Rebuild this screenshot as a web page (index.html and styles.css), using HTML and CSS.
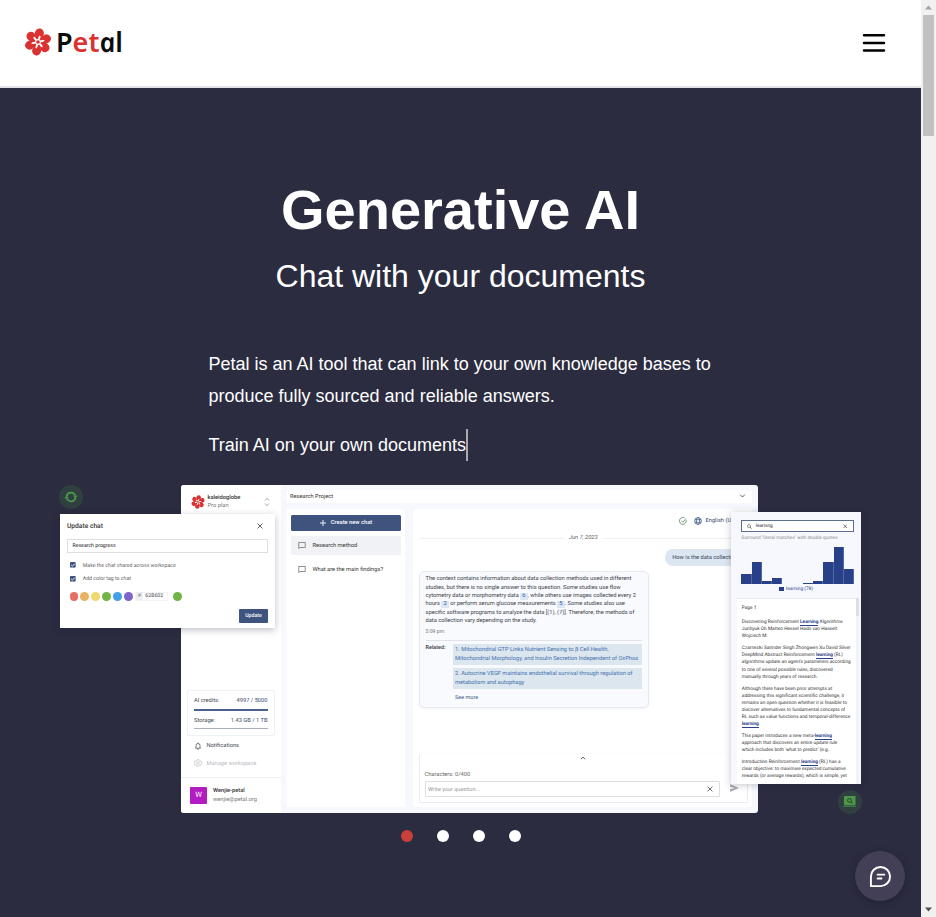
FILE: index.html
```html
<!DOCTYPE html>
<html lang="en">
<head>
<meta charset="utf-8">
<title>Petal</title>
<link rel="stylesheet" href="styles.css">
</head>
<body>
<svg class="defs" aria-hidden="true">
  <symbol id="flower" viewBox="-14 -14 28 28">
    <g fill="#dc3131">
      <ellipse cy="-8.7" rx="4.5" ry="4.900" transform="rotate(9)"/>
      <ellipse cy="-8.7" rx="4.5" ry="4.900" transform="rotate(69)"/>
      <ellipse cy="-8.7" rx="4.5" ry="4.900" transform="rotate(129)"/>
      <ellipse cy="-8.7" rx="4.5" ry="4.900" transform="rotate(189)"/>
      <ellipse cy="-8.7" rx="4.5" ry="4.900" transform="rotate(249)"/>
      <ellipse cy="-8.7" rx="4.5" ry="4.900" transform="rotate(309)"/>
      <circle r="6.5"/>
    </g>
    <g fill="#fff">
      <ellipse cy="-4.4" rx="1" ry="2.300" transform="rotate(18)"/>
      <ellipse cy="-4.4" rx="1" ry="2.300" transform="rotate(78)"/>
      <ellipse cy="-4.4" rx="1" ry="2.300" transform="rotate(138)"/>
      <ellipse cy="-4.4" rx="1" ry="2.300" transform="rotate(198)"/>
      <ellipse cy="-4.4" rx="1" ry="2.300" transform="rotate(258)"/>
      <ellipse cy="-4.4" rx="1" ry="2.300" transform="rotate(318)"/>
      <circle r="2.9"/>
    </g>
    <circle r="1.8" fill="#dc3131"/>
  </symbol>
  <symbol id="cross" viewBox="0 0 10 10"><path d="M1 1 9 9M9 1 1 9" fill="none" stroke="currentColor" stroke-width="1.3"/></symbol>
  <symbol id="bubble" viewBox="0 0 16 14"><path d="M1.5 1h13v10h-10.500l-2.500 2.200z" fill="none" stroke="currentColor" stroke-width="1.3"/></symbol>
  <symbol id="check" viewBox="0 0 10 10"><rect width="10" height="10" rx="1.200" fill="#3b5480"/><path d="M2 5.200 4.200 7.300 8 3" fill="none" stroke="#fff" stroke-width="1.500"/></symbol>
</svg>
<div class="viewport">
  <main class="page">
    <header class="header">
      <a class="brand"><svg class="brand-mark"><use href="#flower"/></svg><span class="brand-name">P<em>et</em><i>a</i>l</span></a>
      <button class="menu" aria-label="Menu"><svg viewBox="0 0 22 20"><path d="M1 2.300h20M1 9.900h20M1 17.500h20" stroke="#000" stroke-width="2.500" stroke-linecap="round"/></svg></button>
    </header>
    <section class="hero">
      <h1>Generative AI</h1>
      <h2>Chat with your documents</h2>
      <div class="intro">
        <p>Petal is an AI tool that can link to your own knowledge bases to<br>produce fully sourced and reliable answers.</p>
        <p class="typed">Train AI on your own documents<span class="caret"></span></p>
      </div>

      <div class="figure">
        <div class="app">
          <aside class="side">
            <div class="account">
              <svg class="account-mark"><use href="#flower"/></svg>
              <div class="stack"><b>kaleidoglobe</b><span>Pro plan</span></div>
              <svg class="updown" viewBox="0 0 6 10"><path d="M1 3.500 3 1.200 5 3.500M1 6.500 3 8.800 5 6.500" fill="none" stroke="#999" stroke-width=".8"/></svg>
            </div>
            <div class="usage">
              <div class="usage-row"><span>AI credits:</span><span class="num">4997 / 5000</span></div>
              <div class="meter full"></div>
              <div class="usage-row"><span>Storage:</span><span class="num">1.43 GB / 1 TB</span></div>
              <div class="meter"></div>
            </div>
            <div class="side-link first">
              <svg viewBox="0 0 16 16"><path d="M2.500 12.500h11M4 12V7a4 4 0 0 1 8 0v5M8 3V1.300M6.500 14.500h3" fill="none" stroke="currentColor" stroke-width="1.400"/></svg>
              <span>Notifications</span>
            </div>
            <div class="side-link muted">
              <svg viewBox="0 0 16 16"><path d="M6.500 1h3l.5 2.200 2 1.200 2-.7 1.500 2.600L14 8l1.500 1.700-1.500 2.600-2-.7-2 1.200-.5 2.200h-3L6 12.800l-2-1.200-2 .7L.5 9.700 2 8 .5 6.300 2 3.700l2 .7 2-1.200z" fill="none" stroke="currentColor" stroke-width="1.300"/><circle cx="8" cy="8" r="2.300" fill="none" stroke="currentColor" stroke-width="1.300"/></svg>
              <span>Manage workspace</span>
            </div>
            <div class="user">
              <div class="avatar">W</div>
              <div class="stack"><b>Wenjie-petal</b><span>wenjie@petal.org</span></div>
            </div>
          </aside>
          <div class="work">
            <div class="topbar"><span>Research Project</span><svg viewBox="0 0 10 6"><path d="M1.500 1 5 4.500 8.500 1" fill="none" stroke="#444" stroke-width="1.300"/></svg></div>
            <div class="columns">
              <div class="chats">
                <div class="create"><svg viewBox="0 0 10 10"><path d="M5 0v10M0 5h10" stroke="#fff" stroke-width="1.500"/></svg><span>Create new chat</span></div>
                <div class="chat active"><svg><use href="#bubble"/></svg><span>Research method</span></div>
                <div class="chat"><svg><use href="#bubble"/></svg><span>What are the main findings?</span></div>
              </div>
              <div class="thread">
                <div class="tools">
                  <svg class="ok" viewBox="0 0 14 14"><path d="M12.500 5.200A6 6 0 1 1 9.500 1.500M4 6.500 6.700 9.200 12.500 2.500" fill="none" stroke="#4c8056" stroke-width="1.300"/></svg>
                  <svg class="globe" viewBox="0 0 14 14"><g fill="none" stroke="#34507f" stroke-width="1.200"><circle cx="7" cy="7" r="6"/><ellipse cx="7" cy="7" rx="2.800" ry="6"/><path d="M1.500 4.700h11M1.500 9.300h11"/></g></svg>
                  <span>English (US)</span>
                </div>
                <div class="date"><span>Jun 7, 2023</span></div>
                <div class="question">How is the data collected?</div>
                <div class="answer">
                  <p>The context contains information about data collection methods used in different<br>studies, but there is no single answer to this question. Some studies use flow<br>cytometry data or morphometry data <mark>6</mark>, while others use images collected every 2<br>hours <mark>2</mark> or perform serum glucose measurements <mark>5</mark>. Some studies also use<br>specific software programs to analyze the data [(1), (7)]. Therefore, the methods of<br>data collection vary depending on the study.</p>
                  <time>5:09 pm</time>
                  <div class="related">
                    <b>Related:</b>
                    <div class="sources">
                      <div class="source">1. Mitochondrial GTP Links Nutrient Sensing to β Cell Health,<br>Mitochondrial Morphology, and Insulin Secretion Independent of OxPhos</div>
                      <div class="source">2. Autocrine VEGF maintains endothelial survival through regulation of<br>metabolism and autophagy</div>
                      <div class="more">See more</div>
                    </div>
                  </div>
                </div>
                <div class="composer">
                  <svg class="up" viewBox="0 0 10 6"><path d="M1.500 5 5 1.500 8.500 5" fill="none" stroke="#444" stroke-width="1.500"/></svg>
                  <label>Characters: 0/400</label>
                  <div class="ask">
                    <div class="ask-field"><span>Write your question...</span><svg><use href="#cross"/></svg></div>
                    <svg class="send" viewBox="0 0 10 9"><path d="M0 0 10 4.500 0 9V5.500L6 4.500 0 3.500z" fill="#a9abb0"/></svg>
                  </div>
                </div>
              </div>
            </div>
          </div>
        </div>

        <div class="badge sync">
          <svg viewBox="0 0 16 16"><g fill="none" stroke="#4e9a4c" stroke-width="2"><path d="M3 7.300A5.100 5.100 0 0 1 12.600 5.800M13 8.700A5.100 5.100 0 0 1 3.400 10.200"/></g><path d="M10.300 6.200h5.400L13 9.600zM5.700 9.800H.3L3 6.400z" fill="#4e9a4c"/></svg>
        </div>
        <div class="badge lens">
          <svg viewBox="0 0 14 12"><path d="M1 0h12v9.800H1z" fill="#4d9748"/><path d="M0 10.400h14V12H0z" fill="#3c7740"/><circle cx="6.700" cy="4.600" r="2" fill="none" stroke="#25402f"/><path d="m8.200 6 1.600 1.700" stroke="#25402f" stroke-width="1.100"/></svg>
        </div>

        <div class="dialog">
          <div class="dialog-head"><b>Update chat</b><svg><use href="#cross"/></svg></div>
          <div class="name-field">Research progress</div>
          <div class="option"><svg><use href="#check"/></svg><span>Make the chat shared across workspace</span></div>
          <div class="option"><svg><use href="#check"/></svg><span>Add color tag to chat</span></div>
          <div class="swatches">
            <i class="red"></i><i class="orange"></i><i class="yellow"></i><i class="green"></i><i class="blue"></i><i class="violet"></i>
            <div class="hex"><span>#</span><b>62B602</b></div>
            <i class="green"></i>
          </div>
          <div class="update">Update</div>
        </div>

        <div class="search">
          <div class="search-field"><svg viewBox="0 0 10 10"><circle cx="4" cy="4" r="3" fill="none" stroke="#444" stroke-width="1.100"/><path d="m6.200 6.200 3.300 3.300" stroke="#444" stroke-width="1.300"/></svg><span>learning</span><svg class="clear"><use href="#cross"/></svg></div>
          <div class="hint">Surround "literal matches" with double quotes</div>
          <div class="chart">
            <i style="height:10.700px"></i><i style="height:22px"></i><i style="height:3.200px"></i><i style="height:6.300px"></i><i style="height:0"></i><i style="height:0"></i><i style="height:1.800px"></i><i style="height:3.200px"></i><i style="height:22px"></i><i style="height:37.300px"></i><i style="height:15.700px"></i>
          </div>
          <div class="legend"><i></i><span>learning (78)</span></div>
          <div class="doc">
            <div class="doc-text">
              <p>Page 1</p>
              <p>Discovering Reinforcement <a>Learning</a> Algorithms<br>Junhyuk Oh Matteo Hessel Hado van Hasselt<br>Wojciech M.</p>
              <p>Czarnecki Satinder Singh Zhongwen Xu David Silver<br>DeepMind Abstract Reinforcement <a>learning</a> (RL)<br>algorithms update an agent's parameters according<br>to one of several possible rules, discovered<br>manually through years of research.</p>
              <p>Although there have been prior attempts at<br>addressing this significant scientific challenge, it<br>remains an open question whether it is feasible to<br>discover alternatives to fundamental concepts of<br>RL such as value functions and temporal-difference<br><a>learning</a>.</p>
              <p>This paper introduces a new meta-<a>learning</a><br>approach that discovers an entire update rule<br>which includes both 'what to predict' (e.g.</p>
              <p>Introduction Reinforcement <a>learning</a> (RL) has a<br>clear objective: to maximise expected cumulative<br>rewards (or average rewards), which is simple, yet</p>
            </div>
            <div class="doc-scroll"><i></i></div>
          </div>
        </div>
      </div>

      <div class="dots"><i class="on"></i><i></i><i></i><i></i></div>
    </section>
    <button class="fab" aria-label="Chat">
      <svg viewBox="0 0 24 24"><g fill="none" stroke="#fff" stroke-width="2" stroke-linejoin="round" stroke-linecap="round"><path d="M2 22V12a10 10 0 1 1 10 10z"/><path d="M9 10h7M9 14h4"/></g></svg>
    </button>
  </main>
  <div class="scrollbar">
    <svg viewBox="0 0 15 15"><path d="M4 9.500h7L7.500 5.500z" fill="#a3a3a3"/></svg>
    <div class="thumb"></div>
    <svg viewBox="0 0 15 15"><path d="M4 5.500h7L7.500 9.500z" fill="#505050"/></svg>
  </div>
</div>
</body>
</html>
```
FILE: styles.css
```css
* { box-sizing: border-box; }
body { margin: 0; overflow: hidden; font-family: "Liberation Sans", Arial, sans-serif; }
h1, h2, p { margin: 0; }
button { border: 0; padding: 0; }
svg { display: block; flex: none; }
.defs { position: absolute; width: 0; height: 0; }

.viewport { display: flex; width: 936px; height: 917px; overflow: hidden; }
.page { position: relative; width: 921px; height: 917px; background: #2b2c40; }

.header { display: flex; align-items: center; justify-content: space-between; height: 88px; padding: 0 36px 2px 24px; background: #fff; border-bottom: 2px solid #e3e3e8; }
.brand { display: flex; align-items: center; gap: 4px; }
.brand-mark { width: 28px; height: 28px; }
.brand-name { font: 600 27px/40px "Noto Sans", sans-serif; color: #0b0b0b; letter-spacing: 0; }
.brand-name em { font-style: normal; color: #dc3131; }
.brand-name i { display: inline-block; transform: skewX(11deg); }
.menu { width: 22px; margin-top: 2px; background: none; }
.menu svg { width: 22px; height: 20px; overflow: visible; }

.scrollbar { display: flex; flex-direction: column; width: 15px; background: #f1f1f1; }
.scrollbar svg { width: 15px; height: 15px; }
.thumb { width: 11px; height: 121px; margin: 0 2px auto; background: #c1c1c1; }

.hero { display: flex; flex-direction: column; align-items: center; padding-top: 90px; color: #fff; }
h1 { font-size: 56px; line-height: 64px; font-weight: 700; }
h2 { margin-top: 14px; font-size: 32px; line-height: 40px; font-weight: 400; }
.intro { width: 504px; margin-top: 52px; font-size: 18px; line-height: 32px; white-space: nowrap; }
.typed { display: flex; margin-top: 17px; }
.caret { width: 2px; height: 32px; background: #a9a9b3; }

.figure { position: relative; width: 801px; height: 328px; margin-top: 24px; font: 5.720px/8.430px Roboto, sans-serif; color: #424852; white-space: nowrap; text-rendering: geometricPrecision; }
.figure b { font-weight: 500; }
.topbar span, .create span, .chat span, .option span, .side-link span, .search-field span, .tools span, .legend span, .ask-field span { padding-top: 1.400px; }
.app { display: flex; width: 576.500px; height: 327.500px; margin-left: 121px; border-radius: 3px; overflow: hidden; background: #f6f8fd; }

.side { display: flex; flex: none; flex-direction: column; width: 99.500px; background: #fff; }
.account { display: flex; align-items: center; height: 34px; padding: 0 10.500px 0 9.500px; }
.account-mark { width: 14px; height: 14px; margin-right: 3px; }
.stack { display: flex; flex-direction: column; padding-top: .8px; line-height: 8.200px; }
.stack b { color: #333; }
.stack span { color: #777; }
.updown { width: 6px; height: 10px; margin-left: auto; }
.usage { width: 88px; height: 46px; margin: 170.500px 0 0 6px; padding: 6.500px 6.500px 0 6px; border: 1px solid #eef0f3; border-radius: 2px; }
.usage-row { display: flex; justify-content: space-between; line-height: 8px; }
.usage .num { color: #34476b; }
.meter { height: 1.200px; margin: 3.500px 0 6.800px; background: #a9afba; }
.meter.full { height: 2px; margin-bottom: 6px; background: #4a6190; }
.side-link { display: flex; align-items: center; gap: 4.500px; height: 17.500px; margin-left: 13px; }
.side-link.first { margin-top: 1.500px; }
.side-link svg { width: 8px; height: 8px; }
.side-link.muted { color: #b9bbbf; }
.user { display: flex; align-items: center; gap: 6px; flex: 1; margin-top: 5px; padding-left: 9px; border-top: 1px solid #eceef1; }
.avatar { width: 17px; height: 16.500px; border-radius: 1px; background: #b31cc0; color: #fff; font-size: 7.500px; line-height: 16.500px; text-align: center; }

.work { flex: 1; min-width: 0; padding: 4.500px 5.500px 6px; }
.topbar { display: flex; align-items: center; justify-content: space-between; height: 13.500px; padding: 0 6.500px 0 4px; background: #fff; border-radius: 2px; color: #333; }
.topbar svg { width: 7px; height: 4px; }
.columns { display: flex; gap: 8px; height: 297.500px; margin-top: 6px; }
.chats { flex: none; width: 119px; padding: 6px 4px 0 5px; background: #fff; border-radius: 2px; color: #333; }
.create { display: flex; align-items: center; justify-content: center; gap: 5px; height: 15.500px; border-radius: 1.500px; background: #3e547f; color: #fff; }
.create { font-weight: 500; }
.create svg { width: 6px; height: 6px; }
.chat { display: flex; align-items: center; gap: 6.500px; height: 19px; margin-top: 5.200px; padding-left: 7px; border-radius: 1px; }
.chat svg { width: 8px; height: 7px; color: #555; }
.chat.active { background: #f0f2f5; }

.thread { position: relative; flex: 1; min-width: 0; padding: 0 4px 0 5.500px; background: #fff; border-radius: 3px; }
.tools { display: flex; align-items: center; height: 23px; padding-left: 260px; color: #34476b; }
.tools .ok { width: 8px; height: 8px; margin-right: 7.500px; }
.tools .globe { width: 8px; height: 8px; margin-right: 3.500px; }
.date { display: flex; align-items: center; gap: 4px; height: 12px; font-style: italic; color: #666; }
.date span { padding-top: 1.400px; }
.date::before, .date::after { content: ""; flex: 1; height: 1px; background: #f0f1f3; }
.question { width: 90px; height: 17px; margin: 4.500px 0 0 246.500px; padding-left: 7.200px; border-radius: 8px; background: #dce6f0; line-height: 18px; color: #35445c; }
.answer { width: 230px; height: 137px; margin-top: 5px; padding: 3.600px 6px 0; border: 1px solid #e6e9ef; border-radius: 5px; background: #f8fafd; color: #3b4048; box-shadow: 0 1px 2px rgba(40, 50, 80, .06); }
.answer mark { display: inline-block; width: 7.400px; height: 7px; border-radius: 1px; background: #dbe5f4; color: #2f57a0; line-height: 7px; text-align: center; }
.answer time { display: block; margin-top: 1.800px; font-size: 5.200px; color: #777; }
.related { display: flex; margin-top: 4px; padding-top: 3.500px; border-top: 1px solid #dfe2e8; }
.related > b { width: 27.500px; font-size: 5.500px; }
.sources { flex: 1; }
.source { height: 20.300px; margin-bottom: 3.600px; padding: 2px 2px 0; background: #dce6ee; color: #4470ae; }
.more { padding: 1.500px 2px; color: #3d5983; font-size: 5.500px; }

.composer { position: absolute; left: 5.500px; right: 4.500px; bottom: 3.500px; height: 50px; padding: 1px 5px 0; border: 1px solid #e9ebef; border-top-color: #fbfbfd; border-radius: 2px; background: #fff; }
.composer .up { width: 6px; height: 4px; margin: 1px auto 0; }
.composer label { display: block; margin-top: 11px; color: #666; }
.ask { display: flex; align-items: center; margin-top: 1.500px; gap: 10px; }
.ask-field { display: flex; align-items: center; justify-content: space-between; width: 295px; height: 16.500px; padding: 0 5.500px 0 2.500px; border: 1px solid #dcdee2; border-radius: 1px; color: #999; font-size: 5.540px; }
.ask-field svg { width: 6px; height: 6px; color: #444; }
.ask .send { width: 9px; height: 8px; margin-top: -3px; }

.badge { position: absolute; display: grid; place-items: center; width: 24px; height: 24px; border-radius: 50%; background: #304041; }
.badge.sync { left: -1px; top: 0; }
.badge.sync svg { width: 14px; height: 14px; }
.badge.lens { left: 777.500px; top: 304.500px; }
.badge.lens svg { width: 13.500px; height: 11.500px; }

.dialog { position: absolute; left: -.5px; top: 28.500px; width: 215.500px; height: 114.500px; padding: 7px 7px 0 7.500px; background: #fff; box-shadow: 0 2px 7px rgba(20, 25, 45, .28); font-size: 5.200px; }
.dialog-head { display: flex; align-items: center; justify-content: space-between; height: 10px; padding-right: 5px; font-size: 6.680px; color: #333; }
.dialog-head b { padding-top: 1.400px; }
.dialog-head svg { width: 6px; height: 6px; }
.name-field { height: 14px; margin: 8.200px 0 5.600px; padding-left: 4.500px; border: 1px solid #dcdee3; line-height: 13px; color: #222; }
.option { display: flex; align-items: center; gap: 7px; height: 13.700px; padding-left: 3px; color: #666; }
.option svg { width: 5.800px; height: 5.800px; }
.swatches { display: flex; align-items: center; gap: 2px; height: 20px; padding: 1px 0 0 2.500px; }
.swatches > i { width: 8.900px; height: 8.900px; border-radius: 50%; }
.red { background: #e76f63; }
.orange { background: #eab264; }
.yellow { background: #efd96e; }
.green { background: #72b544; }
.blue { background: #439fe8; }
.violet { background: #7d63cd; }
.hex { display: flex; align-items: center; gap: 2.500px; width: 33.300px; height: 9px; margin-right: 2.500px; border: 1px solid #f3f4f6; }
.hex span { width: 7px; background: #eceef1; color: #888; text-align: center; line-height: 8px; }
.hex b { padding-top: 1px; font-weight: 400; }
.update { width: 29px; height: 14px; margin: 3px 0 0 auto; border-radius: 1px; background: #3e547f; color: #fff; font-weight: 500; line-height: 15px; text-align: center; }

.search { position: absolute; left: 671px; top: 27px; width: 130px; height: 272px; padding: 8px 2px 0 6px; background: #f6f8fd; box-shadow: 0 1px 7px rgba(20, 25, 45, .25); font-size: 4.770px; line-height: 7.020px; overflow: hidden; }
.search-field { display: flex; align-items: center; width: 113px; height: 12px; margin-left: 4.300px; padding: 0 6px 0 4.500px; border: 1px solid #5c6e90; background: #fff; color: #222; }
.search-field svg { width: 5px; height: 5px; margin-right: 4px; }
.search-field .clear { margin: 0 0 0 auto; width: 4.500px; height: 4.500px; }
.hint { margin: 2.700px 0 0 4.300px; color: #888; }
.chart { display: grid; grid-template-columns: repeat(11, 1fr); align-items: end; height: 37.300px; width: 113px; margin: 5.300px 0 0 4.300px; }
.chart i { background: #274088; border-right: .3px solid #5068a8; }
.legend { display: flex; align-items: center; gap: 1.800px; margin: .5px 0 0 42.300px; color: #274088; }
.legend i { width: 5px; height: 3.500px; background: #274088; }
.doc { display: flex; justify-content: space-between; height: 186px; margin-top: 4.800px; }
.doc-text { width: 119px; padding: 6.300px 0 0 4.800px; background: #fff; color: #333; border-top: 1px solid #e7e9ef; }
.doc-text p { margin-bottom: 5.100px; }
.doc-text p:first-child { margin-bottom: 7px; }
.doc-text a { font-weight: 700; color: #274088; border-bottom: .6px solid #274088; letter-spacing: -.06px; }
.doc-scroll { width: 3px; background: #f1f3f6; }
.doc-scroll i { display: block; height: 18px; background: #dcdee3; }

.dots { display: flex; gap: 24px; margin-top: 17px; }
.dots i { width: 12px; height: 12px; border-radius: 50%; background: #fff; }
.dots .on { background: #c93f3a; }

.fab { position: absolute; right: 16px; bottom: 16px; display: grid; place-items: center; width: 50px; height: 50px; border-radius: 50%; background: #423f57; box-shadow: 0 2px 8px rgba(0, 0, 0, .25); }
.fab svg { width: 23px; height: 23px; }
```
